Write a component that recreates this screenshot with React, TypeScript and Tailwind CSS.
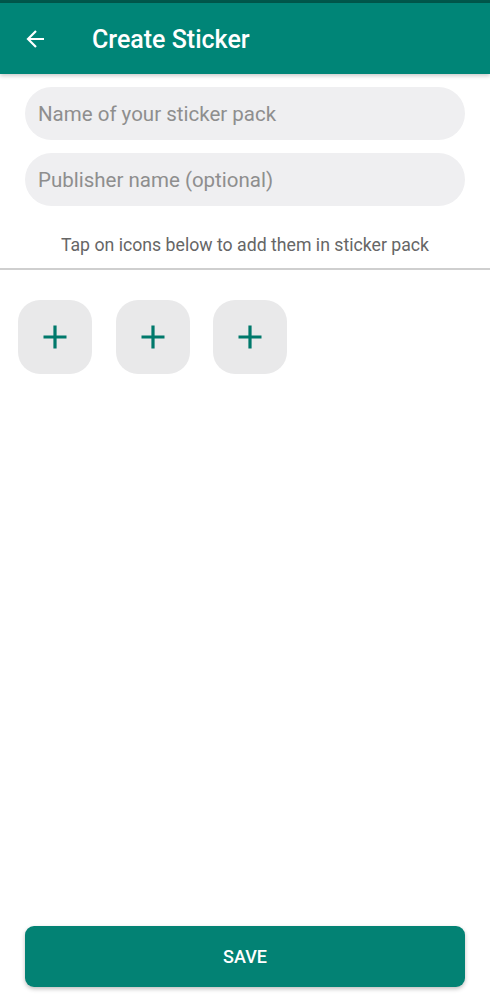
import React from "react";

function Plus() {
  return (
    <svg width="28" height="28" viewBox="0 0 28 28">
      <path d="M14 2.5v23M2.5 14h23" stroke="#00796b" strokeWidth="3.2" />
    </svg>
  );
}

export default function App() {
  return (
    <div className="w-[490px] h-[1000px] bg-white flex flex-col relative" style={{ fontFamily: "Roboto, 'Liberation Sans', sans-serif" }}>
      <div className="h-[3px] bg-[#00574b]" />
      <div className="h-[71px] bg-[#008577] flex items-center shadow-[0_2px_4px_rgba(0,0,0,0.2)] z-10">
        <svg width="24" height="24" viewBox="0 0 24 24" className="ml-[24px]">
          <path d="M20 12H5M12 4l-8 8 8 8" stroke="white" strokeWidth="2.2" fill="none" />
        </svg>
        <div className="ml-[44px] mt-[3px] text-white text-[25px] font-medium">Create Sticker</div>
      </div>
      <div className="px-[25px] pt-[13px] flex flex-col gap-[13px]">
        <div className="h-[53px] rounded-full bg-[#efeff1] flex items-center pl-[13px] pt-[2px] text-[20.5px] text-[#8e8e8e]">Name of your sticker pack</div>
        <div className="h-[53px] rounded-full bg-[#efeff1] flex items-center pl-[13px] pt-[2px] text-[20.5px] text-[#8e8e8e]">Publisher name (optional)</div>
      </div>
      <div className="mt-[27px] text-center text-[17.7px] text-[#666666] leading-[24px]">Tap on icons below to add them in sticker pack</div>
      <div className="mt-[11px] h-[2px] bg-[#cfcfcf]" />
      <div className="flex gap-[23.5px] pl-[18px] mt-[30px]">
        {[0, 1, 2].map((i) => (
          <div key={i} className="w-[74px] h-[74px] rounded-[22px] bg-[#e9e9ea] flex items-center justify-center">
            <Plus />
          </div>
        ))}
      </div>
      <div className="flex-1" />
      <div className="px-[25px] pb-[13px]">
        <div className="h-[61px] rounded-[9px] bg-[#038274] flex items-center justify-center text-white text-[18px] font-medium shadow-[0_2px_4px_rgba(0,0,0,0.25)]">SAVE</div>
      </div>
    </div>
  );
}
